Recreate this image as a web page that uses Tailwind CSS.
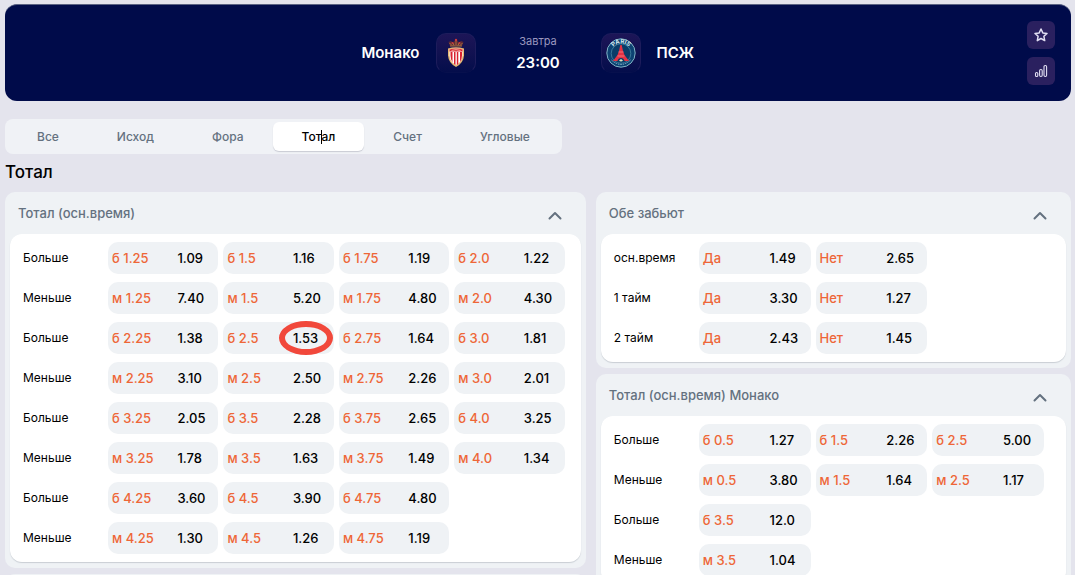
<!DOCTYPE html>
<html lang="ru">
<head>
    <meta charset="UTF-8">
    <meta name="viewport" content="width=device-width, initial-scale=1.0">
    <title>Монако - ПСЖ</title>
    <script src="https://cdn.jsdelivr.net/npm/@tailwindcss/browser@4"></script>
</head>
<body class="h-screen overflow-hidden bg-[#e4e4ed] pl-[5px] pr-1 pt-1 font-['Inter',sans-serif] text-black">
    <!-- Match header -->
    <header class="flex items-center h-[97px] rounded-xl border-t border-[#5b6383] bg-[#000b4a] px-4">
        <div class="w-7"></div>
        <div class="flex-1 grid grid-cols-[1fr_125px_1fr] items-center text-white">
            <div class="flex items-center justify-end gap-4">
                <span class="text-[15px] leading-6 font-semibold">Монако</span>
                <div class="flex items-center justify-center w-10 h-10 rounded-[10px] border border-[#1d1c5b] border-b-[#07104d] bg-linear-to-b from-[#1d1557] to-[#040d4b]">
                    <svg class="w-[18px] h-[30px]" viewBox="0 0 18 30">
                        <path d="M3 8 1.500 4 4 3 6 4.500 9 1l3 3.500 2-1.500 2.500 1L15 8z" fill="#5d2936"/>
                        <path d="M3 8h12M2.500 5 5 7.500M15.500 5 13 7.500M9 2v5M6 5l1 2.500M12 5l-1 2.500" stroke="#a8703f" stroke-width="1" fill="none"/>
                        <circle cx="9" cy="2" r="1.200" fill="#c93a3d"/>
                        <circle cx="5.500" cy="5" r="1" fill="#c93a3d"/>
                        <circle cx="12.500" cy="5" r="1" fill="#c93a3d"/>
                        <path d="M1 10.500Q9 8 17 10.500v7Q16.500 25 9 29 1.500 25 1 17.500z" fill="#e5b873"/>
                        <path d="M2.500 11.500Q9 9.500 15.500 11.500v6Q15 24 9 27.300 3 24 2.500 17.500z" fill="#fff"/>
                        <path d="M2.500 11.500Q9 9.500 15.500 11.500v2h-13zM3.500 14h2v10.500Q3.500 21.500 3.500 17.500zM7 14h1.500v13L7 26zM9.800 14h1.500v12l-1.500 1zM13 14h2v3.500q0 4-2 6.500z" fill="#d92231"/>
                        <path d="M4.500 12.400Q9 11 13.500 12.400" stroke="#f3d1b8" stroke-width=".8" fill="none"/>
                    </svg>
                </div>
            </div>
            <div class="flex flex-col items-center">
                <span class="text-[11px] leading-5 text-[#9b98bf]">Завтра</span>
                <span class="text-[15px] leading-6 font-semibold">23:00</span>
            </div>
            <div class="flex items-center gap-4">
                <div class="flex items-center justify-center w-10 h-10 rounded-[10px] border border-[#1d1c5b] border-b-[#07104d] bg-linear-to-b from-[#1d1557] to-[#040d4b]">
                    <svg class="w-[30px] h-[30px] shrink-0" viewBox="0 0 30 30">
                        <circle cx="15" cy="15" r="14.200" fill="#0c4272" stroke="#82b3c6" stroke-width="1"/>
                        <circle cx="15" cy="15.500" r="9.800" fill="#0a3c68" stroke="#4f91ae" stroke-width=".7"/>
                        <path id="crestArc" d="M5.200 12.500A10.300 10.300 0 0 1 24.800 12.500" fill="none"/>
                        <text class="font-bold" font-size="6" fill="#d5e6ed" text-anchor="middle"><textPath href="#crestArc" startOffset="50%">PARIS</textPath></text>
                        <path d="M14.300 7h1.400l1.300 6 1.500 4 4.500 6h-4.500q-.7-3-3.500-3t-3.500 3H7l4.500-6 1.500-4z" fill="#e23245"/>
                        <path d="M12.500 14h5M11.500 18h7" stroke="#f58087" stroke-width=".8"/>
                        <path d="M13 22.500q2 2 4 0l-2-1.500z" fill="#d8dfc0"/>
                        <path d="M5.500 22Q15 31 24.500 22" stroke="#a4ccd9" stroke-width=".8" stroke-dasharray="1.500 1" fill="none"/>
                    </svg>
                </div>
                <span class="text-[15px] leading-6 font-semibold">ПСЖ</span>
            </div>
        </div>
        <div class="flex flex-col gap-2">
            <button type="button" aria-label="В избранное" class="flex items-center justify-center w-7 h-7 rounded-md bg-[#2a205f] text-[#e2dff3]">
                <svg class="w-3.5 h-3.5" viewBox="0 0 14 14" fill="none" stroke="currentColor" stroke-width="1.500" stroke-linejoin="round">
                    <path d="M7 1l1.800 3.900 4.200.5-3.100 2.900.8 4.300L7 10.500l-3.700 2.100.8-4.300L1 5.400l4.200-.5z"/>
                </svg>
            </button>
            <button type="button" aria-label="Статистика" class="flex items-center justify-center w-7 h-7 rounded-md bg-[#2a205f] text-[#e2dff3]">
                <svg class="w-3.5 h-3.5" viewBox="0 0 14 14" fill="none" stroke="currentColor" stroke-width="1.100">
                    <rect x="1.500" y="8.500" width="2.300" height="4" rx="1.100"/>
                    <rect x="5.600" y="5.500" width="2.600" height="7" rx="1.200"/>
                    <rect x="10" y="1.500" width="2.600" height="11" rx="1.200"/>
                </svg>
            </button>
        </div>
    </header>

    <!-- Market tabs -->
    <nav class="mt-[18px] flex w-fit rounded-lg bg-[#f0f2f6] p-[3px] text-xs font-medium text-[#64717f]">
        <button type="button" class="h-[29px] px-[29px]">Все</button>
        <button type="button" class="h-[29px] px-[29px]">Исход</button>
        <button type="button" class="h-[29px] px-[29px]">Фора</button>
        <button type="button" class="relative h-[29px] rounded-md bg-white px-[29px] text-black shadow-[0_1px_1px_#c9cbd4]">
            Тотал
            <span class="absolute left-12 top-2 h-3.5 w-px bg-black"></span>
        </button>
        <button type="button" class="h-[29px] px-[29px]">Счет</button>
        <button type="button" class="h-[29px] px-[29px]">Угловые</button>
    </nav>

    <h1 class="mt-1.5 text-[17px] leading-6 font-medium">Тотал</h1>

    <main class="mt-2 grid grid-cols-[11fr_9fr] gap-2.5 items-start">
        <div id="leftColumn" class="flex flex-col gap-1.5"></div>
        <div id="rightColumn" class="flex flex-col gap-1.5"></div>
    </main>

    <script>
        const leftMarkets = [
            {
                title: 'Тотал (осн.время)',
                grid: 'grid-cols-4 pr-4',
                rows: [
                    ['Больше', ['б 1.25', '1.09'], ['б 1.5', '1.16'], ['б 1.75', '1.19'], ['б 2.0', '1.22']],
                    ['Меньше', ['м 1.25', '7.40'], ['м 1.5', '5.20'], ['м 1.75', '4.80'], ['м 2.0', '4.30']],
                    ['Больше', ['б 2.25', '1.38'], ['б 2.5', '1.53', true], ['б 2.75', '1.64'], ['б 3.0', '1.81']],
                    ['Меньше', ['м 2.25', '3.10'], ['м 2.5', '2.50'], ['м 2.75', '2.26'], ['м 3.0', '2.01']],
                    ['Больше', ['б 3.25', '2.05'], ['б 3.5', '2.28'], ['б 3.75', '2.65'], ['б 4.0', '3.25']],
                    ['Меньше', ['м 3.25', '1.78'], ['м 3.5', '1.63'], ['м 3.75', '1.49'], ['м 4.0', '1.34']],
                    ['Больше', ['б 4.25', '3.60'], ['б 4.5', '3.90'], ['б 4.75', '4.80']],
                    ['Меньше', ['м 4.25', '1.30'], ['м 4.5', '1.26'], ['м 4.75', '1.19']]
                ]
            },
            { title: '', grid: 'grid-cols-4 pr-4', rows: [] }
        ];

        const rightMarkets = [
            {
                title: 'Обе забьют',
                grid: 'grid-cols-3 pr-[22px]',
                rows: [
                    ['осн.время', ['Да', '1.49'], ['Нет', '2.65']],
                    ['1 тайм', ['Да', '3.30'], ['Нет', '1.27']],
                    ['2 тайм', ['Да', '2.43'], ['Нет', '1.45']]
                ]
            },
            {
                title: 'Тотал (осн.время) Монако',
                grid: 'grid-cols-3 pr-[22px]',
                rows: [
                    ['Больше', ['б 0.5', '1.27'], ['б 1.5', '2.26'], ['б 2.5', '5.00']],
                    ['Меньше', ['м 0.5', '3.80'], ['м 1.5', '1.64'], ['м 2.5', '1.17']],
                    ['Больше', ['б 3.5', '12.0']],
                    ['Меньше', ['м 3.5', '1.04']]
                ]
            }
        ];

        // red oval around the selected coefficient
        const ring = '<span class="absolute -left-3.5 -top-[9px] w-[54px] h-[34px] rounded-[50%] border-[6px] border-[#f1483b]"></span>';

        function oddButton([label, value, marked]) {
            return `
                <button type="button" class="flex items-center justify-between h-8 rounded-[10px] bg-[#eff2f5] pl-1 pb-px text-[13px] leading-4 font-medium">
                    <span class="text-[#ee6637]">${label}</span>
                    <span class="relative w-[41px] text-left">${value}${marked ? ring : ''}</span>
                </button>`;
        }

        function marketCard(market) {
            const rows = market.rows.map(([name, ...odds]) => `
                <div class="flex items-center">
                    <div class="w-[85px] text-xs">${name}</div>
                    <div class="flex-1 grid gap-[5px] ${market.grid}">${odds.map(oddButton).join('')}</div>
                </div>`).join('');
            return `
                <section class="rounded-[10px] bg-[#eff2f5] px-[5px] pb-1.5">
                    <div class="flex items-center justify-between h-[42px] pl-2 pr-[19px]">
                        <h2 class="text-[13px] leading-4 font-medium text-[#64717f]">${market.title}</h2>
                        <button type="button" aria-label="Свернуть" class="mt-1">
                            <svg class="w-3.5 h-3.5" viewBox="0 0 14 14" fill="none" stroke="#64717f" stroke-width="2" stroke-linecap="round" stroke-linejoin="round">
                                <path d="M1.500 10.500 7 5l5.500 5.500"/>
                            </svg>
                        </button>
                    </div>
                    <div class="flex flex-col gap-2 rounded-xl bg-white py-2 pl-[13px] shadow-[0_1px_1px_#c9ced4]">${rows}</div>
                </section>`;
        }

        document.getElementById('leftColumn').innerHTML = leftMarkets.map(marketCard).join('');
        document.getElementById('rightColumn').innerHTML = rightMarkets.map(marketCard).join('');
    </script>
</body>
</html>
